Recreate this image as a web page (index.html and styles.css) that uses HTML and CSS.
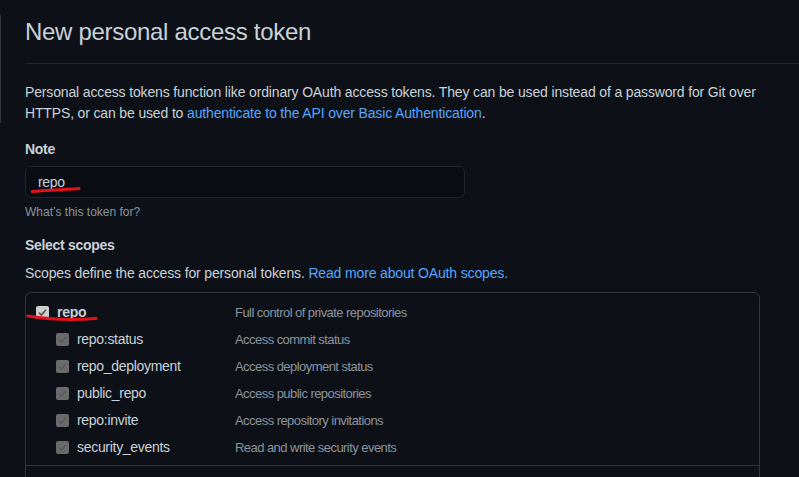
FILE: index.html
```html
<!DOCTYPE html>
<html lang="en">
<head>
<meta charset="utf-8">
<title>New personal access token</title>
<link rel="stylesheet" href="styles.css">
</head>
<body>
<div class="layout">
  <aside class="sidebar"></aside>
  <main class="main">
    <div class="page-head">
      <h2 class="page-title">New personal access token</h2>
    </div>
    <div class="content">
      <p class="intro">Personal access tokens function like ordinary OAuth access tokens. They can be used instead of a password for Git over<br>HTTPS, or can be used to <a href="#" class="link">authenticate to the API over Basic Authentication</a>.</p>

      <div class="form-group">
        <label class="label" for="note">Note</label>
        <div class="input-wrap">
          <input id="note" class="input" type="text" value="repo">
          <svg class="scribble scribble-input" width="52" height="8" viewBox="0 0 52 8"><path d="M2 5.5 C 14 4.5, 30 4, 49 2.5" fill="none" stroke="#e3111b" stroke-width="3" stroke-linecap="round"/></svg>
        </div>
        <p class="hint">What’s this token for?</p>
      </div>

      <div class="form-group scopes-group">
        <h3 class="label">Select scopes</h3>
        <p class="scopes-desc">Scopes define the access for personal tokens. <a href="#" class="link">Read more about OAuth scopes.</a></p>
        <div class="scopes-box">
          <ul class="scope-list">
            <li class="scope-row parent">
              <span class="scope-main">
                <span class="check check-main"><svg width="11" height="11" viewBox="0 0 12 12"><path d="M2.2 6.2 L4.8 8.8 L9.8 3" fill="none" stroke="#555" stroke-width="1.8"/></svg></span>
                <span class="scope-name strong">repo</span>
              </span>
              <span class="scope-desc">Full control of private repositories</span>
              <svg class="scribble scribble-check" width="74" height="10" viewBox="0 0 74 10"><path d="M2 3 C 20 6, 45 7.5, 70 5.5" fill="none" stroke="#e3111b" stroke-width="3" stroke-linecap="round"/></svg>
            </li>
            <li class="scope-row child">
              <span class="scope-main">
                <span class="check check-sub"><svg width="11" height="11" viewBox="0 0 12 12"><path d="M2.2 6.2 L4.8 8.8 L9.8 3" fill="none" stroke="#5a5a5a" stroke-width="1.8"/></svg></span>
                <span class="scope-name">repo:status</span>
              </span>
              <span class="scope-desc">Access commit status</span>
            </li>
            <li class="scope-row child">
              <span class="scope-main">
                <span class="check check-sub"><svg width="11" height="11" viewBox="0 0 12 12"><path d="M2.2 6.2 L4.8 8.8 L9.8 3" fill="none" stroke="#5a5a5a" stroke-width="1.8"/></svg></span>
                <span class="scope-name">repo_deployment</span>
              </span>
              <span class="scope-desc">Access deployment status</span>
            </li>
            <li class="scope-row child">
              <span class="scope-main">
                <span class="check check-sub"><svg width="11" height="11" viewBox="0 0 12 12"><path d="M2.2 6.2 L4.8 8.8 L9.8 3" fill="none" stroke="#5a5a5a" stroke-width="1.8"/></svg></span>
                <span class="scope-name">public_repo</span>
              </span>
              <span class="scope-desc">Access public repositories</span>
            </li>
            <li class="scope-row child">
              <span class="scope-main">
                <span class="check check-sub"><svg width="11" height="11" viewBox="0 0 12 12"><path d="M2.2 6.2 L4.8 8.8 L9.8 3" fill="none" stroke="#5a5a5a" stroke-width="1.8"/></svg></span>
                <span class="scope-name">repo:invite</span>
              </span>
              <span class="scope-desc">Access repository invitations</span>
            </li>
            <li class="scope-row child">
              <span class="scope-main">
                <span class="check check-sub"><svg width="11" height="11" viewBox="0 0 12 12"><path d="M2.2 6.2 L4.8 8.8 L9.8 3" fill="none" stroke="#5a5a5a" stroke-width="1.8"/></svg></span>
                <span class="scope-name">security_events</span>
              </span>
              <span class="scope-desc">Read and write security events</span>
            </li>
          </ul>
          <div class="scope-next"></div>
        </div>
      </div>
    </div>
  </main>
</div>
</body>
</html>
```

FILE: styles.css
```css
* { box-sizing: border-box; }

html, body {
  margin: 0;
  padding: 0;
  background: #0d1117;
  height: 100%;
  overflow: hidden;
}

body {
  font-family: "Liberation Sans", Arial, sans-serif;
  font-size: 14px;
  line-height: 21px;
  letter-spacing: -0.15px;
  color: #c9d1d9;
}

.layout {
  display: flex;
  align-items: flex-start;
}

.sidebar {
  width: 1px;
  height: 108px;
  margin-top: 15px;
  background: #30363d;
  flex: none;
}

.main {
  flex: 1;
  padding-left: 24px;
  min-width: 0;
}

.page-head {
  padding-top: 17px;
  padding-bottom: 16px;
  border-bottom: 1px solid #21262d;
}

.page-title {
  margin: 0;
  font-size: 24px;
  line-height: 30px;
  font-weight: 400;
  letter-spacing: -0.3px;
  color: #c9d1d9;
}

.content {
  width: 735px;
}

.intro {
  margin: 18px 0 0;
  width: 762px;
}

.link {
  color: #58a6ff;
  text-decoration: none;
}

.form-group {
  margin-top: 15px;
}

.label {
  display: block;
  margin: 0;
  font-size: 14px;
  line-height: 21px;
  font-weight: 700;
  letter-spacing: -0.3px;
  color: #c9d1d9;
}

.input-wrap {
  position: relative;
  margin-top: 6px;
  width: 440px;
}

.input {
  display: block;
  width: 440px;
  height: 32px;
  padding: 0 12px;
  font: inherit;
  font-size: 14px;
  letter-spacing: -0.3px;
  color: #c9d1d9;
  background: #090c10;
  border: 1px solid #21262d;
  border-radius: 6px;
  outline: none;
}

.scribble {
  position: absolute;
  pointer-events: none;
}

.scribble-input {
  left: 5px;
  top: 20px;
}

.hint {
  margin: 5px 0 0;
  font-size: 12px;
  line-height: 18px;
  letter-spacing: 0;
  color: #8b949e;
}

.scopes-group {
  margin-top: 14px;
}

.scopes-desc {
  margin: 7px 0 0;
}

.scopes-box {
  margin-top: 8px;
  border: 1px solid #30363d;
  border-radius: 6px;
  height: 200px;
}

.scope-list {
  list-style: none;
  margin: 0;
  padding: 6px 0 4px;
  border-bottom: 1px solid #30363d;
}

.scope-row {
  position: relative;
  display: flex;
  align-items: center;
  height: 27px;
}

.scope-main {
  display: flex;
  align-items: center;
  gap: 8px;
  width: 209px;
  flex: none;
  padding-left: 10px;
}

.child .scope-main {
  padding-left: 30px;
}

.check {
  display: flex;
  align-items: center;
  justify-content: center;
  width: 13px;
  height: 13px;
  flex: none;
  border-radius: 2px;
}

.check-main {
  background: #cfcfcf;
}

.check-sub {
  background: #6b6b6b;
}

.scope-name {
  color: #c9d1d9;
  letter-spacing: -0.3px;
}

.scope-name.strong {
  font-weight: 700;
}

.scope-desc {
  color: #8b949e;
  font-size: 13px;
  letter-spacing: -0.55px;
}

.scribble-check {
  left: 0;
  top: 14px;
}
```
